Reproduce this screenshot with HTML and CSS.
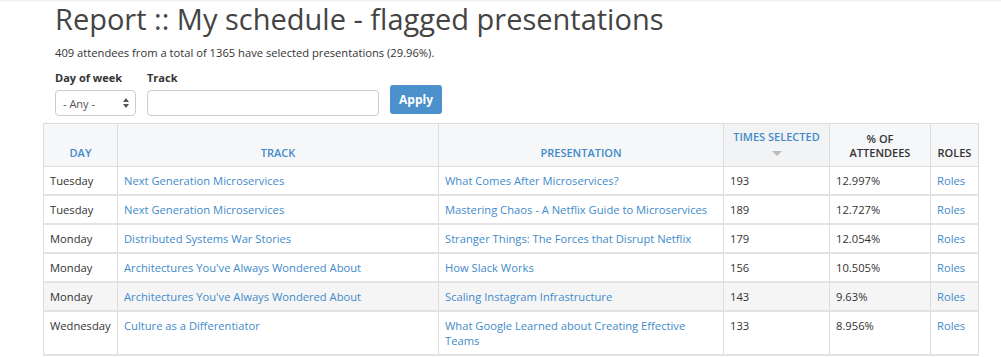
FILE: index.html
```html
<!DOCTYPE html>
<html lang="en">
<head>
  <meta charset="UTF-8">
  <title>Report :: My schedule - flagged presentations</title>
  <link rel="stylesheet" href="styles.css">
</head>
<body>

<div class="top-shade"></div>

<div class="page">
  <div class="intro">
    <h1>Report :: My schedule - flagged presentations</h1>
    <p class="summary">409 attendees from a total of 1365 have selected presentations (29.96%).</p>

    <form class="filters">
      <div class="field">
        <label for="day">Day of week</label>
        <div class="select-box" id="day">
          <span>- Any -</span>
          <svg width="6" height="10" viewBox="0 0 6 10"><path d="M3 0 L6 4 L0 4 Z M0 6 L6 6 L3 10 Z" fill="#555"/></svg>
        </div>
      </div>
      <div class="field">
        <label for="track">Track</label>
        <input type="text" id="track" class="track-input">
      </div>
      <button type="button" class="apply">Apply</button>
    </form>
  </div>

  <table class="report">
    <colgroup>
      <col class="c-day"><col class="c-track"><col class="c-pres"><col class="c-times"><col class="c-pct"><col class="c-roles">
    </colgroup>
    <thead>
      <tr>
        <th class="link">Day</th>
        <th class="link">Track</th>
        <th class="link">Presentation</th>
        <th class="link sorted">Times selected<span class="sort-arrow"></span></th>
        <th>% of<br>attendees</th>
        <th>Roles</th>
      </tr>
    </thead>
    <tbody>
      <tr>
        <td>Tuesday</td>
        <td><a href="#">Next Generation Microservices</a></td>
        <td><a href="#">What Comes After Microservices?</a></td>
        <td>193</td>
        <td>12.997%</td>
        <td><a href="#">Roles</a></td>
      </tr>
      <tr>
        <td>Tuesday</td>
        <td><a href="#">Next Generation Microservices</a></td>
        <td><a href="#">Mastering Chaos - A Netflix Guide to Microservices</a></td>
        <td>189</td>
        <td>12.727%</td>
        <td><a href="#">Roles</a></td>
      </tr>
      <tr>
        <td>Monday</td>
        <td><a href="#">Distributed Systems War Stories</a></td>
        <td><a href="#">Stranger Things: The Forces that Disrupt Netflix</a></td>
        <td>179</td>
        <td>12.054%</td>
        <td><a href="#">Roles</a></td>
      </tr>
      <tr>
        <td>Monday</td>
        <td><a href="#">Architectures You've Always Wondered About</a></td>
        <td><a href="#">How Slack Works</a></td>
        <td>156</td>
        <td>10.505%</td>
        <td><a href="#">Roles</a></td>
      </tr>
      <tr class="hovered">
        <td>Monday</td>
        <td><a href="#">Architectures You've Always Wondered About</a></td>
        <td><a href="#">Scaling Instagram Infrastructure</a></td>
        <td>143</td>
        <td>9.63%</td>
        <td><a href="#">Roles</a></td>
      </tr>
      <tr>
        <td>Wednesday</td>
        <td><a href="#">Culture as a Differentiator</a></td>
        <td><a href="#">What Google Learned about Creating Effective Teams</a></td>
        <td>133</td>
        <td>8.956%</td>
        <td><a href="#">Roles</a></td>
      </tr>
    </tbody>
  </table>
</div>

</body>
</html>
```

FILE: styles.css
```css
body {
  font-family: 'Open Sans', sans-serif;
  background-color: #fff;
  margin: 0;
  padding: 0;
  color: #333;
  font-size: 11.2px;
}

.top-shade {
  height: 2px;
  background: linear-gradient(to bottom, #ececec, #fff);
}

.page {
  padding: 0 23px 0 43px;
}

.intro {
  padding-left: 12px;
}

h1 {
  margin: 0;
  font-size: 29px;
  font-weight: normal;
  line-height: 34px;
  color: #444;
}

.summary {
  margin: 9px 0 0;
  font-size: 11.2px;
  line-height: 15px;
}

.filters {
  display: flex;
  align-items: flex-end;
  gap: 11px;
  margin: 10px 0 0;
}

.field {
  display: flex;
  flex-direction: column;
}

.field label {
  font-weight: bold;
  font-size: 11px;
  line-height: 15px;
  margin-bottom: 5px;
}

.select-box {
  width: 81px;
  height: 26px;
  box-sizing: border-box;
  border: 1px solid #ccc;
  border-radius: 4px;
  display: flex;
  align-items: center;
  justify-content: space-between;
  padding: 0 6px 0 7px;
  font-size: 11px;
  color: #555;
}

.track-input {
  width: 232px;
  height: 26px;
  box-sizing: border-box;
  border: 1px solid #ccc;
  border-radius: 4px;
  margin: 0;
}

.apply {
  background-color: #4c91cc;
  color: #fff;
  border: none;
  border-radius: 3px;
  width: 52px;
  height: 29px;
  font-family: 'Open Sans', sans-serif;
  font-weight: bold;
  font-size: 12px;
  margin-bottom: 2px;
  padding: 0;
}

.report {
  margin-top: 7px;
  border-collapse: collapse;
  table-layout: fixed;
  width: 935px;
  border: 1px solid #ddd;
}

.c-day { width: 74px; }
.c-track { width: 321px; }
.c-pres { width: 285px; }
.c-times { width: 106px; }
.c-pct { width: 101px; }
.c-roles { width: 48px; }

th, td {
  border-left: 1px solid #ddd;
  border-right: 1px solid #ddd;
}

th {
  background-color: #f6f7f9;
  font-size: 11px;
  font-weight: 600;
  text-transform: uppercase;
  line-height: 14px;
  vertical-align: bottom;
  padding: 3px 4px 6px;
  height: 30px;
  color: #333;
  border-bottom: 1px solid #ddd;
}

th.link {
  color: #428bca;
}

th.sorted {
  vertical-align: top;
  padding-top: 6px;
  background-color: #f2f3f5;
}

.sort-arrow {
  display: block;
  width: 0;
  height: 0;
  margin: 7px auto 0;
  border-left: 5px solid transparent;
  border-right: 5px solid transparent;
  border-top: 5px solid #bbb;
}

td {
  padding: 6px 6px;
  line-height: 15px;
  vertical-align: top;
  border-bottom: 2px solid #e3e3e3;
}

tbody tr.hovered td {
  background-color: #f5f5f5;
}

a {
  color: #428bca;
  text-decoration: none;
}
```
